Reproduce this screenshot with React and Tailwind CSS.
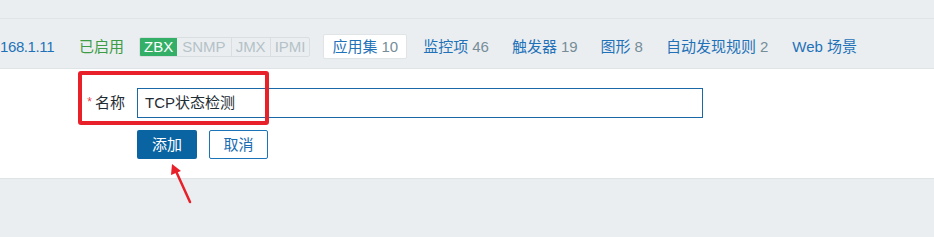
import React from "react";

const FONT = {
  fontFamily: '"Liberation Sans", Arial, "Noto Sans CJK SC", sans-serif',
};

const tabs = [
  { label: "监控项", count: "46" },
  { label: "触发器", count: "19" },
  { label: "图形", count: "8" },
  { label: "自动发现规则", count: "2" },
];

export default function App() {
  return (
    <div
      className="relative w-[934px] h-[237px] overflow-hidden bg-[#ebeef0] text-[15px] leading-[18px]"
      style={FONT}
    >
      {/* top strip */}
      <div className="h-[19px] border-b border-[#dfe4e7]" />

      {/* host tabs */}
      <div className="h-[49px] flex items-center pt-[6px] whitespace-nowrap">
        <span className="text-[#1f72b8] ml-[0px] tracking-[-0.4px]">168.1.11</span>
        <span className="text-[#3d9c45] ml-[25px]">已启用</span>
        <div className="ml-[15px] flex h-[20px] items-stretch border border-[#d9dee1] rounded-[2px] overflow-hidden leading-[18px]">
          <span className="bg-[#34af67] text-white px-[4px]">ZBX</span>
          <span className="text-[#b4c2c8] px-[5px] border-r border-[#d9dee1]">SNMP</span>
          <span className="text-[#b4c2c8] px-[4px] border-r border-[#d9dee1]">JMX</span>
          <span className="text-[#b4c2c8] px-[4px]">IPMI</span>
        </div>
        <div className="ml-[13px] h-[25px] px-[8px] flex items-center bg-white border border-[#dfe4e7] rounded-[2px]">
          <span className="text-[#1f72b8]">应用集</span>
          <span className="text-[#768d99] ml-[4px]">10</span>
        </div>
        {tabs.map((t, i) => (
          <div key={t.label} className={`${i === 0 ? "ml-[16px]" : "ml-[23px]"} flex items-center`}>
            <span className="text-[#1f72b8]">{t.label}</span>
            <span className="text-[#768d99] ml-[4px]">{t.count}</span>
          </div>
        ))}
        <span className="text-[#1f72b8] ml-[24px]">Web 场景</span>
      </div>

      {/* form panel */}
      <div className="h-[111px] bg-white border-t border-b border-[#dfe4e7] pt-[19px]">
        <div className="flex items-center">
          <div className="w-[125px] flex justify-end items-center">
            <span className="text-[#e5484d] text-[12px] mr-[3px] mt-[-2px]">*</span>
            <span className="text-[#1f2c33]">名称</span>
          </div>
          <div className="ml-[12px] w-[566px] h-[30px] border border-[#1b68a6] flex items-center px-[7px] text-[#1f2c33]">
            TCP状态检测
          </div>
        </div>
        <div className="flex ml-[137px] mt-[12px] gap-[12px]">
          <button className="w-[60px] h-[29px] bg-[#0b64a2] text-white rounded-[2px] text-[15px]">
            添加
          </button>
          <button className="w-[59px] h-[29px] bg-white border border-[#1b74b8] text-[#1b6cb0] rounded-[2px] text-[15px]">
            取消
          </button>
        </div>
      </div>

      {/* annotation: red box */}
      <div className="absolute left-[78px] top-[71px] w-[191px] h-[54px] border-[4px] border-[#e8202a] rounded-[3px]" />

      {/* annotation: arrow */}
      <svg className="absolute left-[160px] top-[158px]" width="40" height="50" viewBox="0 0 40 50">
        <line x1="30" y1="44" x2="15" y2="11" stroke="#e8202a" strokeWidth="2.5" strokeLinecap="round" />
        <polygon points="12,6 11,17 21,13" fill="#e8202a" />
      </svg>
    </div>
  );
}
